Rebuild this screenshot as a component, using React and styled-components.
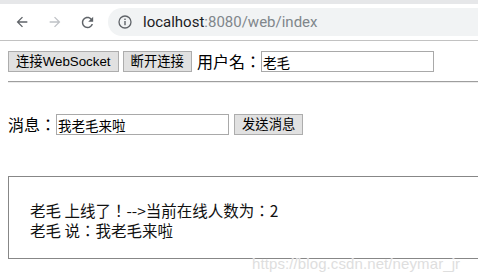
import React from "react";
import styled, { createGlobalStyle } from "styled-components";

const Global = createGlobalStyle`
  html, body { margin: 0; padding: 0; background: #fff; overflow: hidden; }
  body { width: 478px; height: 277px; position: relative; }
`;

const Chrome = styled.div`
  height: 40px;
  border-bottom: 1px solid #c2c2c2;
  background: #fff;
  display: flex;
  flex-direction: column;
`;

const TopStrip = styled.div`
  height: 4px;
  background: #e6e7e9;
`;

const Toolbar = styled.div`
  flex: 1;
  display: flex;
  align-items: center;
  padding-left: 13px;
`;

const NavButton = styled.div`
  width: 18px;
  height: 18px;
  display: flex;
  align-items: center;
  justify-content: center;
  margin-right: ${(p) => p.$gap}px;
  color: ${(p) => (p.$disabled ? "#bfc2c6" : "#5f6368")};
`;

const Omnibox = styled.div`
  flex: 1;
  height: 28px;
  background: #f1f3f4;
  border-radius: 14px 0 0 14px;
  display: flex;
  align-items: center;
  padding-left: 10px;
  font-family: "Segoe UI", Roboto, "Noto Sans", sans-serif;
  font-size: 15px;
`;

const InfoIcon = styled.div`
  width: 14px;
  height: 14px;
  color: #5f6368;
  display: flex;
  margin-right: 11px;
`;

const Host = styled.span`
  color: #202124;
`;
const Rest = styled.span`
  color: #80868b;
`;

const Page = styled.div`
  padding: 10px 0 0 8px;
  font-family: "Noto Sans CJK TC", "Liberation Sans", sans-serif;
  color: #000;
`;

const Row = styled.div`
  display: flex;
  align-items: center;
  height: 21px;
  margin-top: ${(p) => p.$top || 0}px;
`;

const Button = styled.button`
  height: 21px;
  padding: 0 7px;
  border: 1px solid #adadad;
  background: #e1e1e1;
  color: #000;
  font-family: "Liberation Sans", "Noto Sans CJK TC", sans-serif;
  font-size: 13.33px;
  line-height: 19px;
  margin-right: ${(p) => p.$gap || 0}px;
  border-radius: 0;
  white-space: nowrap;
`;

const Label = styled.span`
  font-size: 16px;
  line-height: 21px;
  white-space: nowrap;
`;

const Input = styled.input`
  box-sizing: border-box;
  width: 173px;
  height: 21px;
  border: 1px solid #a9a9a9;
  padding: 0 1px;
  font-family: "Noto Sans CJK TC", sans-serif;
  font-size: 13.5px;
  color: #000;
  margin-right: ${(p) => p.$gap || 0}px;
  outline: none;
`;

const Rule = styled.hr`
  margin: 9px 0 0 0;
  border: 0;
  border-top: 1px solid #9e9e9e;
  border-bottom: 1px solid #ececec;
`;

const MessageBox = styled.div`
  margin-top: 41px;
  height: 83px;
  box-sizing: border-box;
  border: 1px solid #878787;
  border-right: 0;
  padding: 23px 21px 0;
  font-size: 15.5px;
  line-height: 20px;
  color: #111;
`;

const Line = styled.div`
  white-space: nowrap;
`;

const Watermark = styled.div`
  position: absolute;
  left: 252px;
  top: 255px;
  font-family: "Liberation Sans", sans-serif;
  font-size: 15px;
  color: #dedede;
  text-shadow: 0 0 1px #fff;
  white-space: nowrap;
  letter-spacing: 0.1px;
`;

const Arrow = ({ flip }) => (
  <svg width="16" height="16" viewBox="0 0 24 24" style={flip ? { transform: "scaleX(-1)" } : undefined}>
    <path fill="currentColor" d="M20 11H7.83l5.59-5.59L12 4l-8 8 8 8 1.41-1.41L7.83 13H20v-2z" />
  </svg>
);

const Reload = () => (
  <svg width="17" height="17" viewBox="0 0 24 24">
    <path
      fill="currentColor"
      d="M17.65 6.35C16.2 4.9 14.21 4 12 4c-4.42 0-7.99 3.58-7.99 8s3.57 8 7.99 8c3.73 0 6.84-2.55 7.73-6h-2.08c-.82 2.33-3.04 4-5.65 4-3.31 0-6-2.69-6-6s2.69-6 6-6c1.66 0 3.14.69 4.22 1.78L13 11h7V4l-2.35 2.35z"
    />
  </svg>
);

const Info = () => (
  <svg width="14" height="14" viewBox="0 0 14 14">
    <circle cx="7" cy="7" r="6" fill="none" stroke="currentColor" strokeWidth="1.3" />
    <rect x="6.3" y="6" width="1.4" height="4.2" fill="currentColor" />
    <rect x="6.3" y="3.6" width="1.4" height="1.4" fill="currentColor" />
  </svg>
);

export default function App() {
  return (
    <>
      <Global />
      <Chrome>
        <TopStrip />
        <Toolbar>
          <NavButton $gap={15}>
            <Arrow />
          </NavButton>
          <NavButton $gap={14} $disabled>
            <Arrow flip />
          </NavButton>
          <NavButton $gap={12}>
            <Reload />
          </NavButton>
          <Omnibox>
            <InfoIcon>
              <Info />
            </InfoIcon>
            <Host>localhost</Host>
            <Rest>:8080/web/index</Rest>
          </Omnibox>
        </Toolbar>
      </Chrome>
      <Page>
        <Row>
          <Button $gap={4}>连接WebSocket</Button>
          <Button $gap={5}>断开连接</Button>
          <Label>用户名：</Label>
          <Input defaultValue="老毛" />
        </Row>
        <Rule />
        <Row $top={31}>
          <Label>消息：</Label>
          <Input $gap={5} defaultValue="我老毛来啦" />
          <Button>发送消息</Button>
        </Row>
        <MessageBox>
          <Line>老毛 上线了！--&gt;当前在线人数为：2</Line>
          <Line>老毛 说：我老毛来啦</Line>
        </MessageBox>
      </Page>
      <Watermark>https://blog.csdn.net/neymar_jr</Watermark>
    </>
  );
}
